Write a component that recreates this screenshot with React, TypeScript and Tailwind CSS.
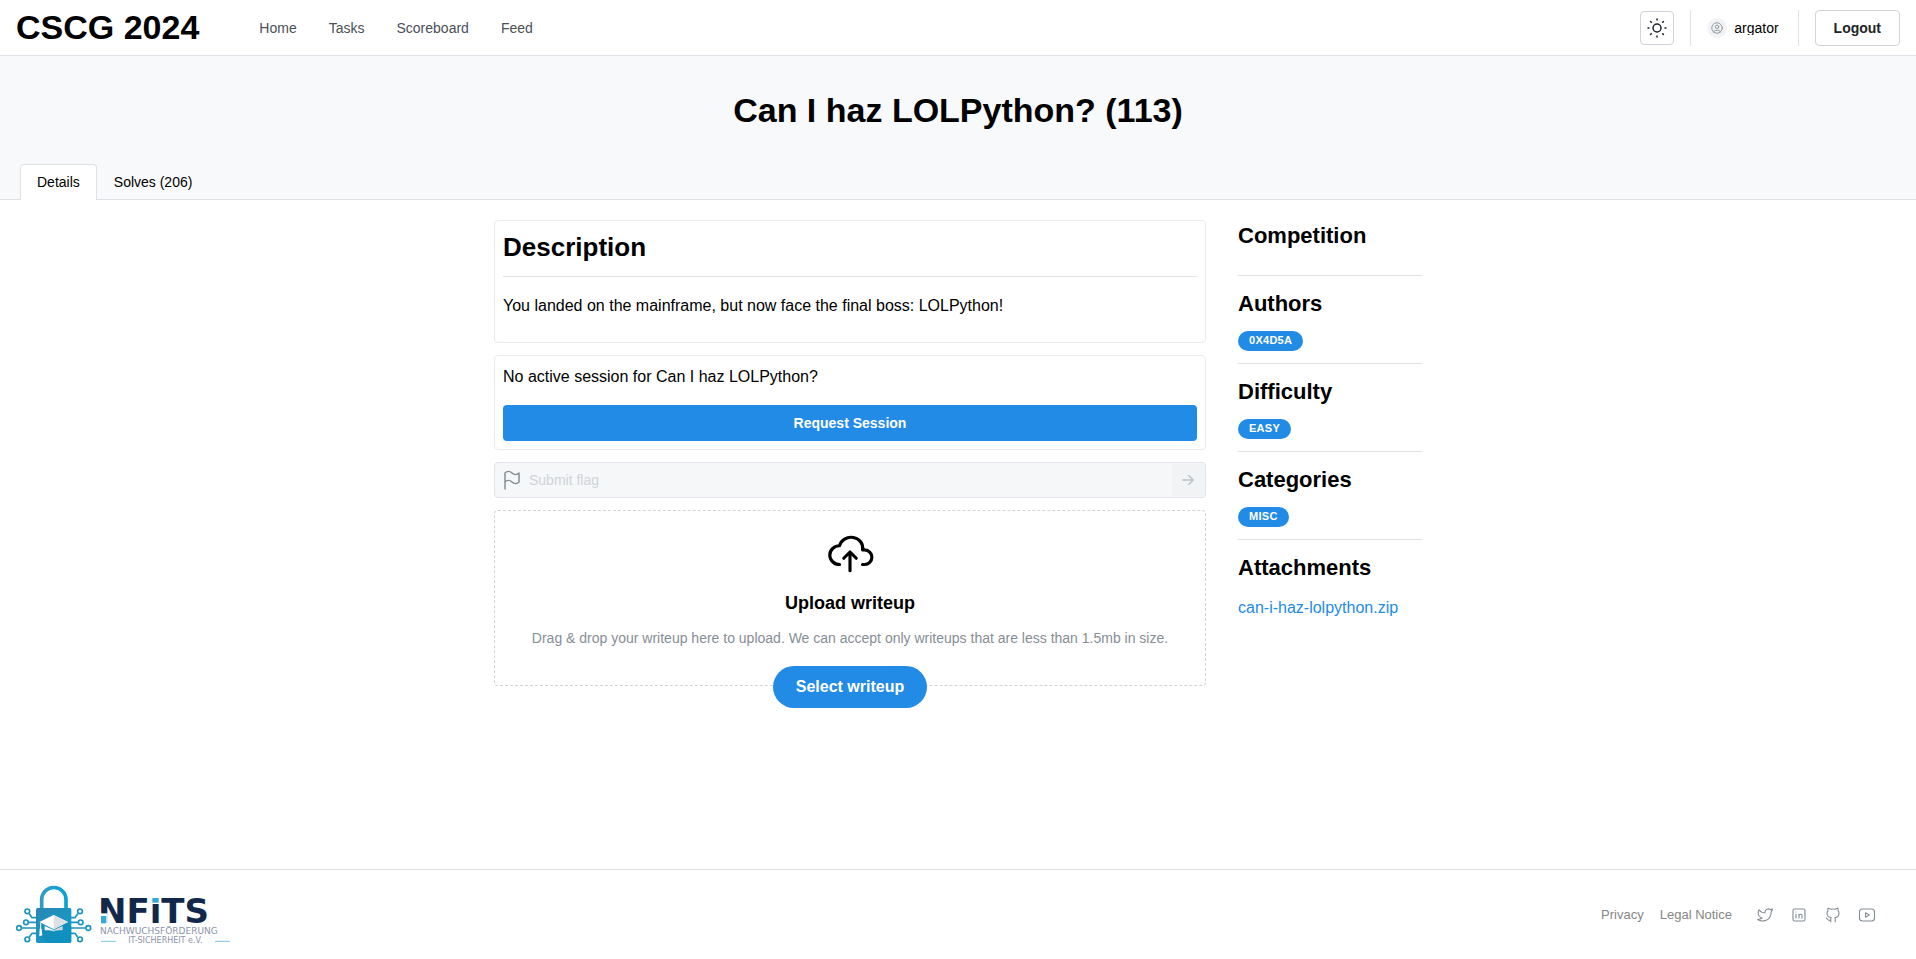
import type { ReactNode } from "react";

type IconProps = { size: number; stroke?: number; className?: string; children: ReactNode };

function Icon({ size, stroke = 2, className, children }: IconProps) {
  return (
    <svg
      width={size}
      height={size}
      viewBox="0 0 24 24"
      fill="none"
      stroke="currentColor"
      strokeWidth={stroke}
      strokeLinecap="round"
      strokeLinejoin="round"
      className={className}
      aria-hidden="true"
    >
      {children}
    </svg>
  );
}

const socials = [
  {
    label: "Twitter",
    icon: (
      <path d="M22 4.01c-1 .49 -1.98 .689 -3 .99c-1.121 -1.265 -2.783 -1.335 -4.38 -.737s-2.643 2.06 -2.62 3.737v1c-3.245 .083 -6.135 -1.395 -8 -4c0 0 -4.182 7.433 4 11c-1.872 1.247 -3.739 2.088 -6 2c3.308 1.803 6.913 2.423 10.034 1.517c3.58 -1.04 6.522 -3.723 7.651 -7.742a13.84 13.84 0 0 0 .497 -3.753c0 -.249 1.51 -2.772 1.818 -4.013z" />
    ),
  },
  {
    label: "LinkedIn",
    icon: (
      <>
        <rect x="4" y="4" width="16" height="16" rx="2" />
        <path d="M8 11v5M8 8v.01M12 16v-5M16 16v-3a2 2 0 0 0 -4 0" />
      </>
    ),
  },
  {
    label: "GitHub",
    icon: (
      <path d="M9 19c-4.3 1.4 -4.3 -2.5 -6 -3m12 5v-3.5c0 -1 .1 -1.4 -.5 -2c2.8 -.3 5.5 -1.4 5.5 -6a4.6 4.6 0 0 0 -1.3 -3.2a4.2 4.2 0 0 0 -.1 -3.2s-1.1 -.3 -3.5 1.3a12.3 12.3 0 0 0 -6.2 0c-2.4 -1.6 -3.5 -1.3 -3.5 -1.3a4.2 4.2 0 0 0 -.1 3.2a4.6 4.6 0 0 0 -1.3 3.2c0 4.6 2.7 5.7 5.5 6c-.6 .6 -.6 1.2 -.5 2v3.5" />
    ),
  },
  {
    label: "YouTube",
    icon: (
      <>
        <rect x="2" y="4" width="20" height="16" rx="4" />
        <path d="M10 9l5 3l-5 3z" />
      </>
    ),
  },
];

function Logo() {
  return (
    <svg width="216" height="61" viewBox="48 72 648 183" role="img" aria-label="NFITS">
      <defs>
        <linearGradient id="lock-body" x1="0" y1="0" x2="1" y2="1">
          <stop offset="0" stopColor="#2b86b4" />
          <stop offset="0.5" stopColor="#1c94c0" />
          <stop offset="1" stopColor="#0a9fce" />
        </linearGradient>
        <linearGradient id="shackle" x1="0" y1="0" x2="1" y2="0">
          <stop offset="0" stopColor="#2f9cc6" />
          <stop offset="1" stopColor="#0aa3d2" />
        </linearGradient>
      </defs>
      <path
        d="M125 148v-29a36 36 0 0 1 73 0v29"
        fill="none"
        stroke="url(#shackle)"
        strokeWidth="11"
      />
      <g fill="none" stroke="#1c94c0" strokeWidth="5">
        <path d="M88 161l8 12h14M86 187h24M64 204h46M88 231l8 -11h14" />
        <path d="M233 161l-8 12h-14M234 187h-24M257 204h-47M233 231l-8 -11h-14" />
        <circle cx="82" cy="154" r="7" />
        <circle cx="78" cy="187" r="7" />
        <circle cx="57" cy="204" r="7" />
        <circle cx="82" cy="238" r="7" />
        <circle cx="240" cy="154" r="7" />
        <circle cx="242" cy="187" r="7" />
        <circle cx="265" cy="204" r="7" />
        <circle cx="240" cy="238" r="7" />
      </g>
      <rect x="108" y="144" width="106" height="105" rx="5" fill="url(#lock-body)" />
      <path d="M118 210l4 17l22 22h65q5 0 5 -5v-44l-11 -13z" fill="#0b84b4" opacity="0.45" />
      <path d="M134 198v13q27 -2 27 5v-6z" fill="#f4f5f6" />
      <path d="M188 198v13q-27 -2 -27 5v-6z" fill="#d3d8dc" />
      <path d="M161 165l43 21l-43 22l-43 -22z" fill="#ffffff" />
      <path d="M161 165l43 21l-43 22z" fill="#dde1e4" />
      <path d="M122 189v18" stroke="#ffffff" strokeWidth="3" />
      <path d="M119 206h6l2 20l-9 3z" fill="#ffffff" />
      <text
        x="294"
        y="190"
        fontSize="102"
        fontWeight="700"
        fontFamily="'DejaVu Sans', sans-serif"
        fill="#12284b"
      >
        NFiTS
      </text>
      <rect x="298" y="160" width="25" height="34" fill="#ffffff" />
      <rect x="303" y="168" width="16" height="22" fill="#35a8d4" />
      <rect x="452" y="106" width="30" height="25" fill="#ffffff" />
      <rect x="457" y="114" width="19" height="14" fill="#35a8d4" />
      <text x="300" y="221" fontSize="27" fontFamily="'DejaVu Sans', sans-serif" fill="#8b93aa">
        NACHWUCHSFÖRDERUNG
      </text>
      <text
        x="496"
        y="250"
        textAnchor="middle"
        fontSize="24"
        fontFamily="'DejaVu Sans', sans-serif"
        fill="#8b93aa"
      >
        IT-SICHERHEIT e.V.
      </text>
      <path d="M303 244h45M645 244h45" stroke="#7cc5e2" strokeWidth="3" />
    </svg>
  );
}

function SideSection({ title, children }: { title: string; children?: ReactNode }) {
  return (
    <section className="flex flex-col items-start gap-3">
      <h3 className="text-[22px] leading-[31px] font-bold">{title}</h3>
      <div>{children}</div>
    </section>
  );
}

function Badge({ children }: { children: ReactNode }) {
  return (
    <span className="flex h-5 items-center rounded-full bg-[#228be6] px-[11px] pb-px text-[11px] leading-none font-bold tracking-wide text-white uppercase">
      {children}
    </span>
  );
}

export default function App() {
  return (
    <div className="flex min-h-screen flex-col bg-white font-['Liberation_Sans',Arial,sans-serif] text-black">
      <header className="flex h-14 items-center justify-between border-b border-[#dee2e6] px-4">
        <div className="flex items-center gap-11">
          <a href="#" className="pb-0.5 text-[34px] leading-[44px] font-bold">
            CSCG 2024
          </a>
          <nav className="flex text-sm text-[#495057]">
            {["Home", "Tasks", "Scoreboard", "Feed"].map((item) => (
              <a key={item} href="#" className="px-4 py-2">
                {item}
              </a>
            ))}
          </nav>
        </div>
        <div className="flex items-center gap-4">
          <button
            aria-label="Toggle color scheme"
            className="flex size-[34px] items-center justify-center rounded border border-[#ced4da] text-[#212529]"
          >
            <Icon size={24} stroke={1.5}>
              <circle cx="12" cy="12" r="4" />
              <path d="M3 12h1m8 -9v1m8 8h1m-9 8v1m-6.4 -15.4l.7 .7m12.1 -.7l-.7 .7m0 11.4l.7 .7m-12.1 -.7l-.7 .7" />
            </Icon>
          </button>
          <div className="flex h-9 items-center border-x border-[#dee2e6] pr-[19px] pl-4">
            <button className="flex items-center gap-[7px] text-sm">
              <span className="flex size-5 items-center justify-center rounded-full bg-[#f1f3f5] text-[#868e96]">
                <Icon size={14} stroke={1.5}>
                  <circle cx="12" cy="12" r="9" />
                  <circle cx="12" cy="10" r="3" />
                  <path d="M6.168 18.849a4 4 0 0 1 3.832 -2.849h4a4 4 0 0 1 3.834 2.855" />
                </Icon>
              </span>
              <span className="overflow-hidden leading-[14px]">argator</span>
            </button>
          </div>
          <button className="h-9 rounded border border-[#ced4da] px-[18px] text-sm font-bold text-[#212529]">
            Logout
          </button>
        </div>
      </header>

      <div className="bg-[#f8f9fa] pt-8">
        <h1 className="text-center text-[34px] leading-[44px] font-bold">
          Can I haz LOLPython? (113)
        </h1>
        <div className="mt-8 flex border-b border-[#dee2e6] px-5 text-sm leading-[14px]" role="tablist">
          <button
            role="tab"
            aria-selected="true"
            className="-mb-px h-9 rounded-t border border-b-0 border-[#dee2e6] bg-white px-4 pb-0.5"
          >
            Details
          </button>
          <button
            role="tab"
            aria-selected="false"
            className="-mb-px h-9 border border-b-0 border-transparent px-4 pb-0.5"
          >
            Solves (206)
          </button>
        </div>
      </div>

      <main className="mx-auto flex w-full max-w-[960px] gap-8 px-4 pt-5 pb-8">
        <div className="flex min-w-0 flex-1 flex-col gap-3">
          <section className="rounded border border-[#e9ecef] p-2">
            <h2 className="text-[26px] leading-[37px] font-bold">Description</h2>
            <hr className="mt-2.5 mb-4 border-[#dee2e6]" />
            <p className="mb-4 text-base leading-[25px]">
              You landed on the mainframe, but now face the final boss: LOLPython!
            </p>
          </section>

          <section className="flex flex-col gap-4 rounded border border-[#e9ecef] p-2">
            <p className="text-base leading-[25px]">No active session for Can I haz LOLPython?</p>
            <button className="h-9 rounded bg-[#228be6] text-sm font-bold text-white">
              Request Session
            </button>
          </section>

          <form className="flex h-9 items-center rounded border border-[#e1e5e9] bg-[#f6f7f9] pr-px pl-[5px]">
            <label htmlFor="flag" className="text-[#868e96]">
              <Icon size={24} stroke={1.5}>
                <path d="M5 5a5 5 0 0 1 7 0a5 5 0 0 0 7 0v9a5 5 0 0 1 -7 0a5 5 0 0 0 -7 0v-9zM5 21v-7" />
              </Icon>
            </label>
            <input
              id="flag"
              type="text"
              disabled
              placeholder="Submit flag"
              aria-label="Submit flag"
              className="min-w-0 flex-1 bg-transparent px-[5px] text-sm outline-none placeholder:text-[#cfd3d8]"
            />
            <button
              type="button"
              disabled
              aria-label="Submit"
              className="flex size-8 items-center justify-center rounded bg-[#f1f3f5] text-[#bcc2c8]"
            >
              <Icon size={18}>
                <path d="M5 12h14M13 18l6 -6M13 6l6 6" />
              </Icon>
            </button>
          </form>

          <section className="flex flex-col items-center rounded border border-dashed border-[#ced4da] px-4 pt-4">
            <Icon size={50} stroke={1.5}>
              <path d="M7 18a4.6 4.4 0 0 1 0 -9a5 4.5 0 0 1 11 2h1a3.5 3.5 0 0 1 0 7h-1" />
              <path d="M9 15l3 -3l3 3M12 12v9" />
            </Icon>
            <h2 className="mt-3 text-lg font-bold">Upload writeup</h2>
            <p className="mt-2.5 text-center text-sm leading-[22px] text-[#868e96]">
              Drag &amp; drop your writeup here to upload. We can accept only writeups that are less
              than 1.5mb in size.
            </p>
            <button className="mt-[17px] -mb-[23px] h-[42px] rounded-full bg-[#228be6] px-[23px] text-base font-bold text-white">
              Select writeup
            </button>
          </section>
        </div>

        <aside className="flex w-[184px] flex-col gap-3">
          <SideSection title="Competition" />
          <hr className="border-[#dee2e6]" />
          <SideSection title="Authors">
            <Badge>0x4d5a</Badge>
          </SideSection>
          <hr className="border-[#dee2e6]" />
          <SideSection title="Difficulty">
            <Badge>Easy</Badge>
          </SideSection>
          <hr className="border-[#dee2e6]" />
          <SideSection title="Categories">
            <Badge>Misc</Badge>
          </SideSection>
          <hr className="border-[#dee2e6]" />
          <SideSection title="Attachments">
            <a href="#" className="text-base leading-[25px] text-[#228be6]">
              can-i-haz-lolpython.zip
            </a>
          </SideSection>
        </aside>
      </main>

      <footer className="mt-auto flex items-center justify-between border-t border-[#dee2e6] px-4 py-3.5">
        <Logo />
        <div className="flex items-center gap-4 pr-4 text-[13px] text-[#868686]">
          <a href="#">Privacy</a>
          <a href="#">Legal Notice</a>
          <div className="flex text-[#868e96]">
            {socials.map(({ label, icon }) => (
              <a
                key={label}
                href="#"
                aria-label={label}
                className="flex size-[34px] items-center justify-center"
              >
                <Icon size={18} stroke={1.5}>
                  {icon}
                </Icon>
              </a>
            ))}
          </div>
        </div>
      </footer>
    </div>
  );
}
